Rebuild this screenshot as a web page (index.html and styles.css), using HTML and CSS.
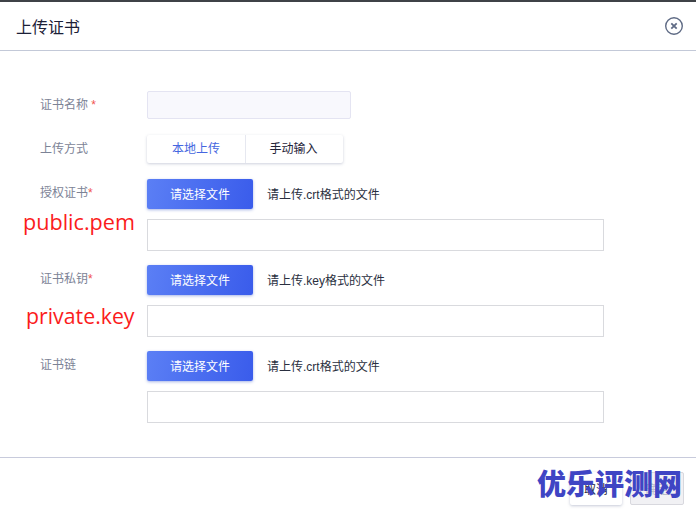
FILE: index.html
```html
<!DOCTYPE html>
<html lang="zh-CN">
<head>
<meta charset="utf-8">
<title>上传证书</title>
<link rel="stylesheet" href="styles.css">
</head>
<body>
<div class="dialog">
  <header class="head">
    <h1 class="title">上传证书</h1>
    <svg class="close" width="20" height="20" viewBox="0 0 20 20" fill="none" stroke="#5f6b85">
      <circle cx="10" cy="10" r="8.3" stroke-width="1.4"/>
      <path d="M7.3 7.3l5.4 5.4M12.7 7.3l-5.4 5.4" stroke-width="1.8"/>
    </svg>
  </header>
  <main class="form">
    <div class="row name-row">
      <label class="label">证书名称 <em>*</em></label>
      <div class="name-input"></div>
    </div>
    <div class="row mode-row">
      <label class="label">上传方式</label>
      <div class="tabs">
        <span class="tab active">本地上传</span>
        <span class="tab">手动输入</span>
      </div>
    </div>
    <div class="file-group">
      <div class="row">
        <label class="label">授权证书<em>*</em></label>
        <button class="pick">请选择文件</button>
        <span class="hint">请上传.crt格式的文件</span>
      </div>
      <div class="area"></div>
    </div>
    <div class="file-group">
      <div class="row">
        <label class="label">证书私钥<em>*</em></label>
        <button class="pick">请选择文件</button>
        <span class="hint">请上传.key格式的文件</span>
      </div>
      <div class="area"></div>
    </div>
    <div class="file-group">
      <div class="row">
        <label class="label">证书链</label>
        <button class="pick">请选择文件</button>
        <span class="hint">请上传.crt格式的文件</span>
      </div>
      <div class="area"></div>
    </div>
  </main>
  <footer class="foot">
    <button class="btn cancel">取消</button>
    <button class="btn ok">确定</button>
  </footer>
</div>
<span class="note note-public">public.pem</span>
<span class="note note-private">private.key</span>
<span class="mark">优乐评测网</span>
</body>
</html>
```
FILE: styles.css
```css
* { box-sizing: border-box; }
html, body { margin: 0; padding: 0; }
body {
  width: 696px;
  height: 511px;
  overflow: hidden;
  position: relative;
  background: #fff;
  font-family: "Liberation Sans", "Noto Sans CJK SC", sans-serif;
  font-size: 12px;
  color: #1f2438;
}
.dialog { border-top: 2px solid #3f4247; }
.head {
  height: 49px;
  padding: 0 12px 0 16px;
  display: flex;
  align-items: center;
  justify-content: space-between;
  border-bottom: 1px solid #c3c9d8;
}
.title { margin: 0; font-size: 16px; font-weight: 400; color: #1b2037; }
.close { margin-top: -1px; }
.form { height: 406px; padding: 40px 0 0 40px; }
.row { display: flex; align-items: center; }
.label { width: 107px; flex: none; color: #7c8396; }
.label em { font-style: normal; color: #f0534f; }
.name-row { height: 28px; }
.name-row .label, .mode-row .label { padding-bottom: 4px; }
.name-input {
  width: 204px;
  height: 28px;
  background: #f8f8fd;
  border: 1px solid #e4e4f2;
  border-radius: 2px;
}
.mode-row { height: 28px; margin-top: 16px; }
.tabs {
  display: flex;
  height: 28px;
  border-radius: 2px;
  box-shadow: 0 1px 3px rgba(90, 100, 140, .3);
}
.tab {
  display: flex;
  align-items: center;
  justify-content: center;
  width: 97px;
  padding: 0 2px 4px 0;
  color: #1f2438;
}
.tab.active { width: 99px; padding-right: 0; color: #4566e0; border-right: 1px solid #e6e8f0; }
.file-group { margin-top: 16px; }
.file-group .row { height: 30px; }
.file-group .label { padding-bottom: 6px; }
.pick {
  width: 106px;
  height: 30px;
  padding: 0 0 2px;
  border: 0;
  border-radius: 2px;
  background: linear-gradient(100deg, #5b7ff5, #3a5ceb);
  box-shadow: 0 1px 3px rgba(60, 90, 200, .45);
  color: #fff;
  font: inherit;
}
.hint { margin-left: 14px; padding-bottom: 2px; color: #2a2f40; }
.area {
  width: 457px;
  height: 32px;
  margin: 10px 0 0 107px;
  border: 1px solid #d9dade;
}
.file-group + .file-group { margin-top: 14px; }
.foot {
  height: 54px;
  border-top: 1px solid #c8cbdc;
  display: flex;
  justify-content: flex-end;
  align-items: flex-start;
  gap: 8px;
  padding: 14px 12px 0 0;
}
.btn {
  height: 33px;
  padding: 0;
  border-radius: 2px;
  font: inherit;
}
.cancel { width: 52px; border: 0; background: #fff; color: #1f2438; box-shadow: 0 1px 3px rgba(90, 100, 140, .35); }
.ok { width: 54px; border: 1px solid #d8d8de; background: #f1f1f4; color: #b9bcc8; }
.note {
  position: absolute;
  font-family: "Open Sans", sans-serif;
  font-size: 21.6px;
  line-height: 28px;
  color: #fb1c1c;
}
.note-public { left: 23px; top: 208px; }
.note-private { left: 26px; top: 302px; font-size: 21.3px; }
.mark {
  position: absolute;
  left: 537px;
  top: 462px;
  font-family: "Noto Sans CJK SC", sans-serif;
  font-size: 29px;
  line-height: 40px;
  font-weight: 900;
  color: #3f45c4;
}
```
